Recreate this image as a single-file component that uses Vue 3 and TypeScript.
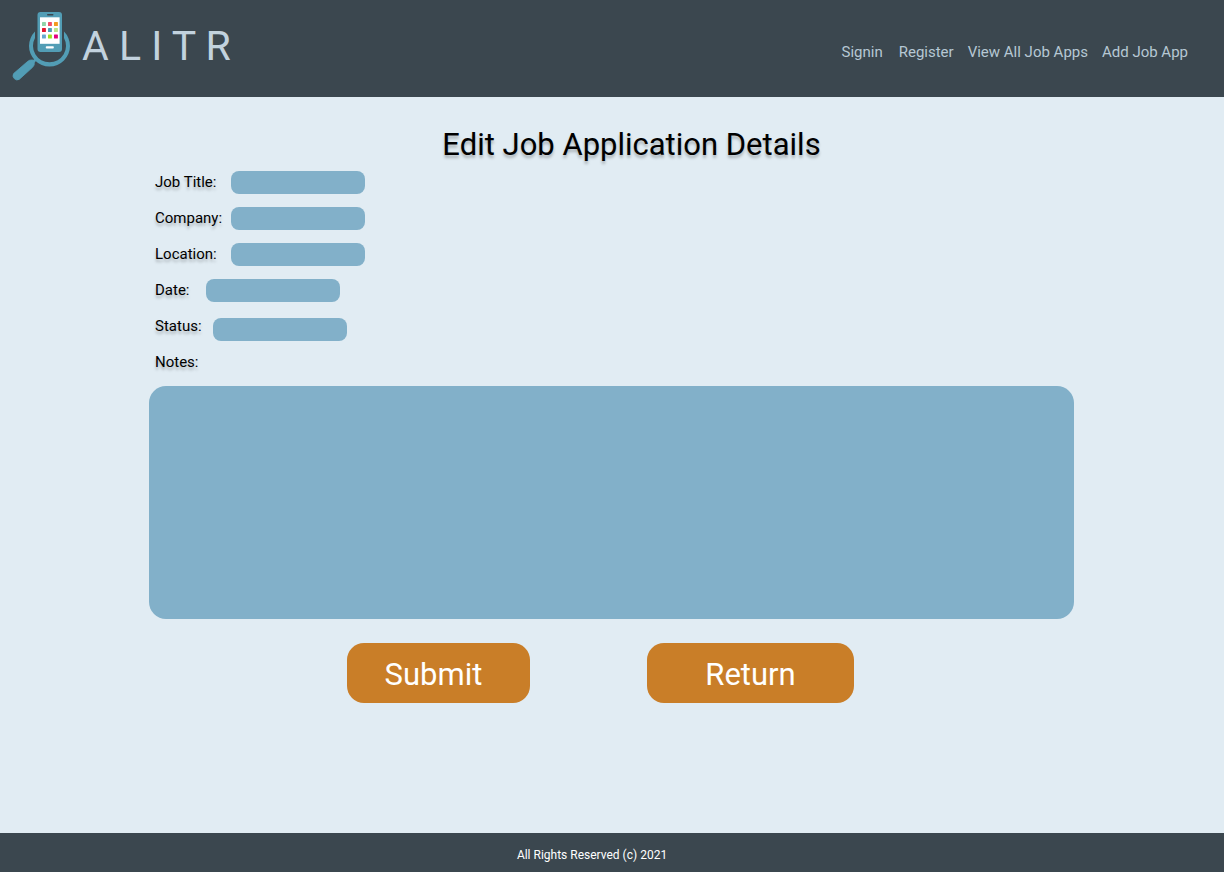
<script setup lang="ts">
import { reactive } from 'vue'

type FieldKey = 'title' | 'company' | 'location' | 'date' | 'status'

interface Field {
  key: FieldKey
  label: string
}

const links: string[] = ['Signin', 'Register', 'View All Job Apps', 'Add Job App']

const fields: Field[] = [
  { key: 'title', label: 'Job Title:' },
  { key: 'company', label: 'Company:' },
  { key: 'location', label: 'Location:' },
  { key: 'date', label: 'Date:' },
  { key: 'status', label: 'Status:' },
]

const form = reactive({ title: '', company: '', location: '', date: '', status: '', notes: '' })

const tiles = [
  { x: 42, y: 22, fill: '#8fd3a8' },
  { x: 48, y: 22, fill: '#ef4d68' },
  { x: 54, y: 22, fill: '#f39a1f' },
  { x: 42, y: 28, fill: '#e3172f' },
  { x: 48, y: 28, fill: '#4f9db5' },
  { x: 54, y: 28, fill: '#b9e58b' },
  { x: 42, y: 34.5, fill: '#68a9cd' },
  { x: 48, y: 34.5, fill: '#9be01f' },
  { x: 54, y: 34.5, fill: '#e5007e' },
]
</script>

<template>
  <div class="page">
    <header class="header">
      <a class="brand" href="#">
        <svg class="logo" width="76" height="97" viewBox="0 0 76 97" aria-hidden="true">
          <path d="M35 31.5 A20.5 20.5 0 1 0 64 31.5 V38 A16.5 16.5 0 1 1 35 38 Z" fill="#529db5" />
          <path d="M33 62 L36.5 59" stroke="#529db5" stroke-width="2.4" />
          <path d="M13.6 73.6 L27.8 61.3 Q29.6 59.8 32 60 L33.6 60.2 L34.3 62 Q34.8 65.4 32.6 67.3 L19.2 79.4 A4.2 4.2 0 0 1 13.6 73.6 Z" fill="#529db5" stroke="#529db5" stroke-width="0.8" />
          <rect x="37.5" y="12" width="24.5" height="40" rx="3" fill="#529db5" />
          <rect x="47" y="14" width="6.5" height="1.4" rx="0.7" fill="#3b474f" />
          <rect x="40" y="17.3" width="19.6" height="26.5" fill="#fff" />
          <rect v-for="t in tiles" :key="`${t.x}-${t.y}`" :x="t.x" :y="t.y" width="3.9" height="3.9" rx="0.5" :fill="t.fill" />
          <rect x="45.8" y="46.2" width="8" height="2.4" rx="0.8" fill="#fff" />
        </svg>
        <span class="wordmark">A L I T R</span>
      </a>
      <nav class="nav">
        <a v-for="link in links" :key="link" href="#">{{ link }}</a>
      </nav>
    </header>

    <main class="main">
      <h1>Edit Job Application Details</h1>
      <form @submit.prevent>
        <div v-for="f in fields" :key="f.key" class="row" :class="f.key">
          <label :for="f.key">{{ f.label }}</label>
          <input :id="f.key" v-model="form[f.key]" type="text" />
        </div>
        <div class="row">
          <label for="notes">Notes:</label>
        </div>
        <textarea id="notes" v-model="form.notes"></textarea>
        <div class="actions">
          <button class="submit" type="submit">Submit</button>
          <button class="return" type="button">Return</button>
        </div>
      </form>
    </main>

    <footer class="footer">All Rights Reserved (c) 2021</footer>
  </div>
</template>

<style>
body {
  margin: 0;
  background: #fff;
}
</style>

<style scoped>
.page {
  box-sizing: border-box;
  min-height: 100vh;
  padding-bottom: 1px;
  display: flex;
  flex-direction: column;
  font-family: Roboto, 'Liberation Sans', sans-serif;
  font-size: 15px;
  color: #000;
}

.header {
  display: flex;
  justify-content: space-between;
  background: #3b474f;
}

.brand {
  display: flex;
  color: #c2d2de;
  text-decoration: none;
}

.logo {
  display: block;
}

.wordmark {
  padding-left: 6px;
  padding-top: 22px;
  font-size: 41px;
  line-height: 48px;
  white-space: nowrap;
}

.nav {
  display: flex;
  gap: 14px;
  padding: 42px 36px 0 0;
  line-height: 20px;
}

.nav a {
  color: #b6c8d4;
  text-decoration: none;
  white-space: nowrap;
}

.nav a:first-child {
  margin-right: 2px;
}

.main {
  flex: 1;
  padding: 28px 150px 40px 149px;
  background: #e1ecf3;
}

h1 {
  margin: 0;
  padding-left: 40px;
  font-size: 31px;
  line-height: 39px;
  font-weight: 400;
  text-align: center;
}

h1,
label {
  text-shadow: 0 3px 3px rgba(0, 0, 0, 0.25);
}

.row {
  display: flex;
  align-items: center;
  height: 36px;
  padding-left: 6px;
}

label {
  min-width: 76px;
  white-space: nowrap;
}

.date label {
  min-width: 51px;
}

.status label {
  min-width: 58px;
}

input {
  box-sizing: border-box;
  width: 134px;
  height: 23px;
  padding: 0 8px;
  border: 0;
  border-radius: 8px;
  background: #82b0c9;
  font: inherit;
}

.status input {
  margin-top: 6px;
}

textarea {
  display: block;
  box-sizing: border-box;
  width: 100%;
  height: 233px;
  margin-top: 6px;
  padding: 16px;
  border: 0;
  border-radius: 17px;
  background: #82b0c9;
  font: inherit;
  resize: none;
}

.actions {
  display: flex;
  justify-content: center;
  gap: 117px;
  margin-top: 24px;
  padding-right: 22px;
}

button {
  height: 60px;
  padding: 2px 0 0;
  border: 0;
  border-radius: 17px;
  background: #c97e28;
  color: #fff;
  font: inherit;
  font-size: 31px;
}

.submit {
  width: 183px;
  padding-right: 10px;
}

.return {
  width: 207px;
}

.footer {
  padding: 14px 40px 9px 0;
  background: #3b474f;
  color: #fff;
  font-size: 12px;
  line-height: 16px;
  text-align: center;
}
</style>
